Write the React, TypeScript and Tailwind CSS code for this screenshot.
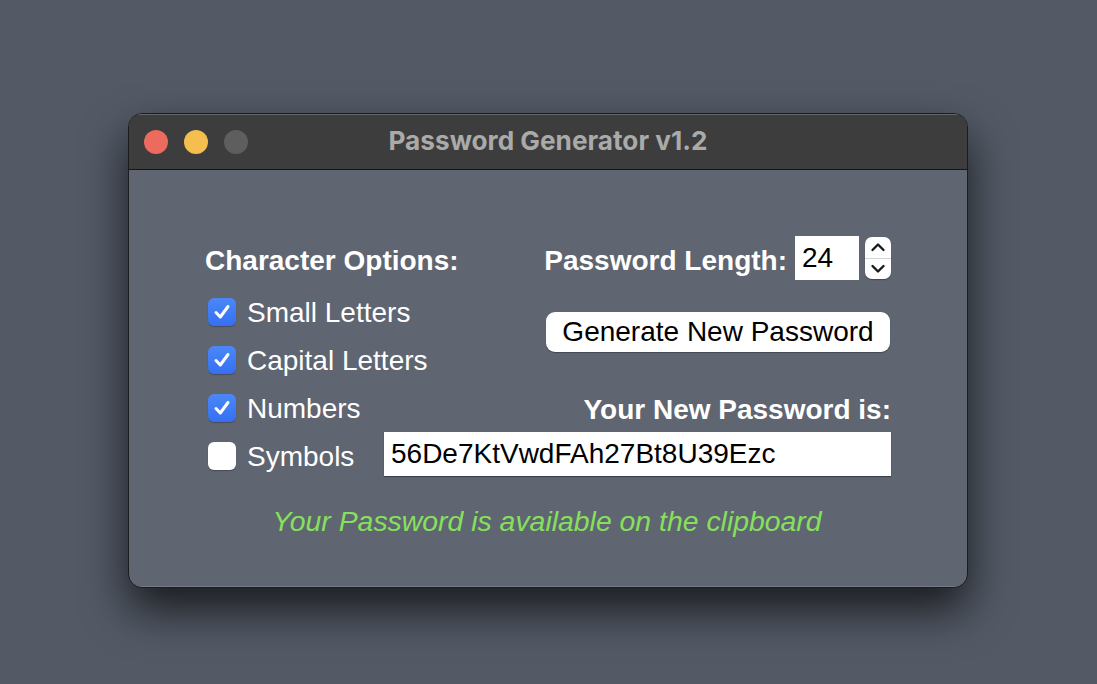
import { useState } from 'react';

type Option = {
	key: string;
	label: string;
};

const OPTIONS: Option[] = [
	{ key: 'small', label: 'Small Letters' },
	{ key: 'capital', label: 'Capital Letters' },
	{ key: 'numbers', label: 'Numbers' },
	{ key: 'symbols', label: 'Symbols' },
];

function CheckBox({ checked, onClick }: { checked: boolean; onClick: () => void }) {
	return (
		<button
			onClick={onClick}
			className={
				checked
					? 'shrink-0 w-[28px] h-[28px] rounded-[6px] bg-gradient-to-b from-[#4a88fa] to-[#356ff0] flex items-center justify-center shadow-[0_1px_1px_rgba(0,0,0,0.25)]'
					: 'shrink-0 w-[28px] h-[28px] rounded-[6px] bg-white shadow-[0_1px_1px_rgba(0,0,0,0.25)]'
			}
		>
			{checked && (
				<svg width="22" height="22" viewBox="0 0 22 22" fill="none">
					<path d="M5 11.5 L9.3 16 L17 5.5" stroke="white" strokeWidth="3" strokeLinecap="round" strokeLinejoin="round" />
				</svg>
			)}
		</button>
	);
}

function Stepper() {
	return (
		<div className="w-[26px] h-[42px] ml-[6px] rounded-[7px] bg-white flex flex-col shadow-[0_1px_1px_rgba(0,0,0,0.3)]">
			<div className="flex-1 flex items-center justify-center border-b border-[#d4d4d4]">
				<svg width="16" height="10" viewBox="0 0 16 10" fill="none">
					<path d="M2.5 8 L8 2.5 L13.5 8" stroke="#1a1a1a" strokeWidth="2.4" strokeLinecap="round" strokeLinejoin="round" />
				</svg>
			</div>
			<div className="flex-1 flex items-center justify-center">
				<svg width="16" height="10" viewBox="0 0 16 10" fill="none">
					<path d="M2.5 2 L8 7.5 L13.5 2" stroke="#1a1a1a" strokeWidth="2.4" strokeLinecap="round" strokeLinejoin="round" />
				</svg>
			</div>
		</div>
	);
}

export default function App() {
	const [checked, setChecked] = useState<Record<string, boolean>>({
		small: true,
		capital: true,
		numbers: true,
		symbols: false,
	});

	const toggle = (key: string) => setChecked(prev => ({ ...prev, [key]: !prev[key] }));

	return (
		<div className="w-[1097px] h-[684px] bg-[#535a66] pt-[113px] pl-[128px] font-['Liberation_Sans',Arial,sans-serif]">
			<div className="w-[840px] h-[475px] rounded-[14px] border border-[#1c1c1c] bg-[#5f6571] overflow-hidden flex flex-col shadow-[0_22px_45px_rgba(0,0,0,0.7)]">
				{/* title bar */}
				<div className="h-[56px] bg-[#3c3d3c] border-b border-[#151515] flex items-center px-[15px] shadow-[inset_0_1px_0_rgba(255,255,255,0.22)]">
					<div className="w-[104px] flex gap-[16px]">
						<div className="w-[24px] h-[24px] rounded-full bg-[#ec6a5e]" />
						<div className="w-[24px] h-[24px] rounded-full bg-[#f4bf4f]" />
						<div className="w-[24px] h-[24px] rounded-full bg-[#5d5e5d]" />
					</div>
					<div className="flex-1 text-center text-[#a9aaa9] font-['Inter',sans-serif] font-bold text-[26.2px] leading-none">
						Password Generator v1.2
					</div>
					<div className="w-[104px]" />
				</div>

				{/* body */}
				<div className="flex-1 flex flex-col pt-[66px] pl-[76px] pr-[76px] text-white text-[28px] shadow-[inset_0_-1px_0_rgba(255,255,255,0.15)]">
					<div className="h-[44px] flex items-center justify-between">
						<div className="font-bold leading-none mt-[5px] whitespace-nowrap">Character Options:</div>
						<div className="flex items-center">
							<div className="font-bold leading-none mt-[5px] mr-[8px] whitespace-nowrap">Password Length:</div>
							<input
								defaultValue="24"
								className="w-[64px] h-[44px] bg-white text-black text-[28px] px-[7px] outline-none"
							/>
							<Stepper />
						</div>
					</div>

					<div className="flex mt-[8px]">
						<div className="w-[179px] shrink-0 flex flex-col">
							{OPTIONS.map(opt => (
								<div key={opt.key} className="h-[48px] flex items-center gap-[11px] pl-[3px] whitespace-nowrap">
									<CheckBox checked={checked[opt.key]} onClick={() => toggle(opt.key)} />
									<span className="leading-none mt-[2px]">{opt.label}</span>
								</div>
							))}
						</div>
						<div className="flex-1 flex flex-col items-end">
							<button className="mt-[24px] mr-[1px] w-[344px] h-[40px] rounded-[9px] bg-white text-black text-[28px] leading-none shadow-[0_1px_1px_rgba(0,0,0,0.3)]">
								Generate New Password
							</button>
							<div className="h-[48px] mt-[32px] flex items-center font-bold leading-none whitespace-nowrap pt-[3px]">
								Your New Password is:
							</div>
							<input
								readOnly
								value="56De7KtVwdFAh27Bt8U39Ezc"
								className="w-full h-[44px] bg-white text-black text-[28px] px-[7px] outline-none shadow-[0_1px_1px_rgba(0,0,0,0.35)]"
							/>
						</div>
					</div>

					<div className="mt-[27px] text-center italic text-[#86e05b] text-[28.4px] leading-none -ml-[2px]">
						Your Password is available on the clipboard
					</div>
				</div>
			</div>
		</div>
	);
}
